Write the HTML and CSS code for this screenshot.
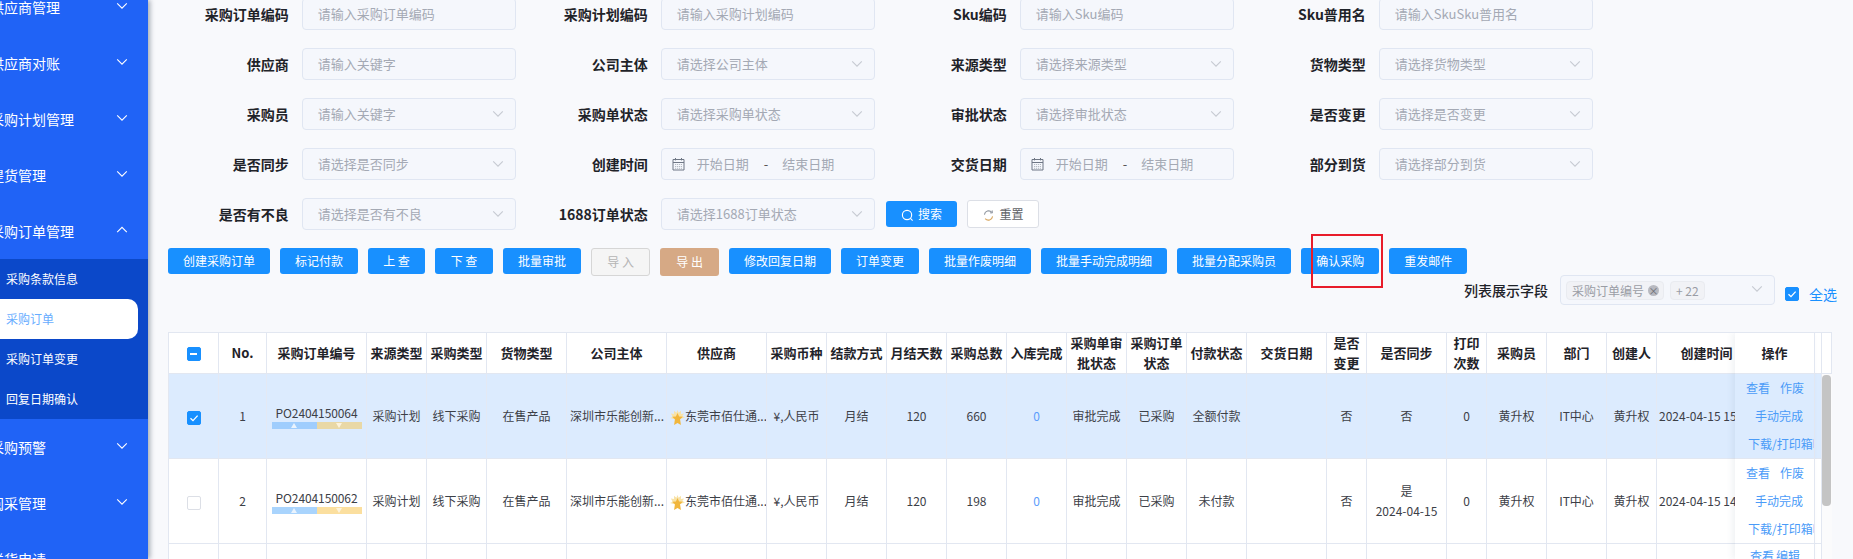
FILE: index.html
```html
<!DOCTYPE html>
<html lang="zh-CN">
<head>
<meta charset="utf-8">
<title>采购订单</title>
<link rel="stylesheet" href="styles.css">
</head>
<body>
<svg class="defs" width="0" height="0" aria-hidden="true">
  <symbol id="chev" viewBox="0 0 12 8"><path d="M1.2 1.4 6 6.2l4.8-4.8" fill="none" stroke="currentColor" stroke-width="1.1"/></symbol>
  <symbol id="chevup" viewBox="0 0 12 8"><path d="M1.2 6.2 6 1.4l4.8 4.8" fill="none" stroke="currentColor" stroke-width="1.1"/></symbol>
  <symbol id="cal" viewBox="0 0 13 14"><path d="M1 2.5h11v10.5H1zM1 5.5h11M3.5 1v2.4M9.500 1v2.400" fill="none" stroke="#6f7785" stroke-width="1"/><path d="M3 7.500h7M3 9.500h7M3 11.300h7" stroke="#a3a9b4" stroke-width=".8" stroke-dasharray="1.200 .8"/></symbol>
  <symbol id="star" viewBox="0 0 14 14"><path d="M7 0 8 2.600 10.300.8l-.1 2.900 3-.5-1.700 2.500 2.500 1.300-3.200.9L7 9 3.200 8.400 0 7.500l2.500-1.300L.8 3.200l3 .5L3.700.8 6 2.600z" fill="#f8e3a8"/><path d="M7 2.800 8.500 6l3.500.4-2.600 2.300.8 5.300L7 12.200 3.800 14l.8-5.300L2 6.400 5.500 6z" fill="#f1b63c"/></symbol>
  <symbol id="check" viewBox="0 0 14 14"><path d="M3.500 7.200 6 9.600l4.600-5" fill="none" stroke="#fff" stroke-width="1.300"/></symbol>
</svg>

<aside class="sidebar">
  <ul class="menu">
    <li class="menu-item"><span class="menu-text">供应商管理</span><svg class="menu-chev"><use href="#chev"/></svg></li>
    <li class="menu-item"><span class="menu-text">供应商对账</span><svg class="menu-chev"><use href="#chev"/></svg></li>
    <li class="menu-item"><span class="menu-text">采购计划管理</span><svg class="menu-chev"><use href="#chev"/></svg></li>
    <li class="menu-item"><span class="menu-text">提货管理</span><svg class="menu-chev"><use href="#chev"/></svg></li>
    <li class="menu-item"><span class="menu-text">采购订单管理</span><svg class="menu-chev"><use href="#chevup"/></svg></li>
    <li class="submenu">
      <div class="sub-item">采购条款信息</div>
      <div class="sub-item sub-active">采购订单</div>
      <div class="sub-item">采购订单变更</div>
      <div class="sub-item">回复日期确认</div>
    </li>
    <li class="menu-item"><span class="menu-text">采购预警</span><svg class="menu-chev"><use href="#chev"/></svg></li>
    <li class="menu-item"><span class="menu-text">阅采管理</span><svg class="menu-chev"><use href="#chev"/></svg></li>
    <li class="menu-item"><span class="menu-text">送货申请</span></li>
  </ul>
</aside>

<main class="main">
  <form class="filters">
    <div class="field"><label class="flabel">采购订单编码</label><div class="input"><span>请输入采购订单编码</span></div></div>
    <div class="field"><label class="flabel">采购计划编码</label><div class="input"><span>请输入采购计划编码</span></div></div>
    <div class="field"><label class="flabel">Sku编码</label><div class="input"><span>请输入Sku编码</span></div></div>
    <div class="field"><label class="flabel">Sku普用名</label><div class="input"><span>请输入SkuSku普用名</span></div></div>

    <div class="field"><label class="flabel">供应商</label><div class="input"><span>请输入关键字</span></div></div>
    <div class="field"><label class="flabel">公司主体</label><div class="input"><span>请选择公司主体</span><svg class="sel-chev"><use href="#chev"/></svg></div></div>
    <div class="field"><label class="flabel">来源类型</label><div class="input"><span>请选择来源类型</span><svg class="sel-chev"><use href="#chev"/></svg></div></div>
    <div class="field"><label class="flabel">货物类型</label><div class="input"><span>请选择货物类型</span><svg class="sel-chev"><use href="#chev"/></svg></div></div>

    <div class="field"><label class="flabel">采购员</label><div class="input"><span>请输入关键字</span><svg class="sel-chev"><use href="#chev"/></svg></div></div>
    <div class="field"><label class="flabel">采购单状态</label><div class="input"><span>请选择采购单状态</span><svg class="sel-chev"><use href="#chev"/></svg></div></div>
    <div class="field"><label class="flabel">审批状态</label><div class="input"><span>请选择审批状态</span><svg class="sel-chev"><use href="#chev"/></svg></div></div>
    <div class="field"><label class="flabel">是否变更</label><div class="input"><span>请选择是否变更</span><svg class="sel-chev"><use href="#chev"/></svg></div></div>

    <div class="field"><label class="flabel">是否同步</label><div class="input"><span>请选择是否同步</span><svg class="sel-chev"><use href="#chev"/></svg></div></div>
    <div class="field"><label class="flabel">创建时间</label><div class="input date"><svg class="cal"><use href="#cal"/></svg><span class="d1">开始日期</span><span class="dash">-</span><span class="d2">结束日期</span></div></div>
    <div class="field"><label class="flabel">交货日期</label><div class="input date"><svg class="cal"><use href="#cal"/></svg><span class="d1">开始日期</span><span class="dash">-</span><span class="d2">结束日期</span></div></div>
    <div class="field"><label class="flabel">部分到货</label><div class="input"><span>请选择部分到货</span><svg class="sel-chev"><use href="#chev"/></svg></div></div>

    <div class="field"><label class="flabel">是否有不良</label><div class="input"><span>请选择是否有不良</span><svg class="sel-chev"><use href="#chev"/></svg></div></div>
    <div class="field"><label class="flabel">1688订单状态</label><div class="input"><span>请选择1688订单状态</span><svg class="sel-chev"><use href="#chev"/></svg></div></div>
    <div class="search-actions">
      <button type="button" class="btn btn-search"><svg class="ic" viewBox="0 0 14 14"><circle cx="6.500" cy="6.500" r="5" fill="none" stroke="#fff" stroke-width="1.200"/><path d="m10.200 10.200 2.300 2.300" stroke="#fff" stroke-width="1.200"/></svg>搜索</button>
      <button type="button" class="btn btn-reset"><svg class="ic" viewBox="0 0 14 14"><path d="M2.600 6a4.600 4.600 0 0 1 8-2.400" fill="none" stroke="#8c939d" stroke-width="1.200"/><path d="M11.400 8a4.600 4.600 0 0 1-8 2.400" fill="none" stroke="#d8a65f" stroke-width="1.200"/><path d="m11 1.500.2 2.800-2.600-.2" fill="none" stroke="#8c939d"/></svg>重置</button>
    </div>
  </form>

  <div class="toolbar">
    <button type="button" class="btn">创建采购订单</button>
    <button type="button" class="btn">标记付款</button>
    <button type="button" class="btn btn-up">上 查</button>
    <button type="button" class="btn btn-down">下 查</button>
    <button type="button" class="btn">批量审批</button>
    <button type="button" class="btn btn-disabled">导 入</button>
    <button type="button" class="btn btn-export">导 出</button>
    <button type="button" class="btn">修改回复日期</button>
    <button type="button" class="btn">订单变更</button>
    <button type="button" class="btn">批量作废明细</button>
    <button type="button" class="btn">批量手动完成明细</button>
    <button type="button" class="btn">批量分配采购员</button>
    <button type="button" class="btn">确认采购</button>
    <button type="button" class="btn">重发邮件</button>
  </div>

  <div class="columns-row">
    <span class="columns-label">列表展示字段</span>
    <div class="multi">
      <span class="tag">采购订单编号<i class="tag-x">×</i></span>
      <span class="tag tag-n">+ 22</span>
      <svg class="multi-chev"><use href="#chev"/></svg>
    </div>
    <span class="cb cb-on cb-all"><svg><use href="#check"/></svg></span>
    <span class="all-text">全选</span>
  </div>

  <div class="table-wrap">
    <table class="grid">
      <colgroup>
        <col class="w50"><col class="w48"><col class="w100"><col class="w60"><col class="w60"><col class="w80"><col class="w100"><col class="w100">
        <col class="w60"><col class="w60"><col class="w60"><col class="w60"><col class="w60"><col class="w60"><col class="w60"><col class="w60">
        <col class="w80"><col class="w40"><col class="w80"><col class="w40"><col class="w60"><col class="w60"><col class="w50"><col class="w100"><col class="w57"><col class="w8">
      </colgroup>
      <thead>
        <tr>
          <th><span class="cb cb-on"><i class="dash-mark"></i></span></th>
          <th class="no">No.</th><th>采购订单编号</th><th>来源类型</th><th>采购类型</th><th>货物类型</th><th>公司主体</th><th>供应商</th>
          <th>采购币种</th><th>结款方式</th><th>月结天数</th><th>采购总数</th><th>入库完成</th><th>采购单审批状态</th><th>采购订单状态</th><th>付款状态</th>
          <th>交货日期</th><th>是否变更</th><th>是否同步</th><th>打印次数</th><th>采购员</th><th>部门</th><th>创建人</th><th class="nowrap">创建时间</th><th></th><th></th>
        </tr>
      </thead>
      <tbody>
        <tr class="selected">
          <td><span class="cb cb-on"><svg><use href="#check"/></svg></span></td>
          <td>1</td>
          <td><div class="po">PO2404150064</div><div class="bars bars-a"><span class="up"></span><span class="down"></span></div></td>
          <td>采购计划</td><td>线下采购</td><td>在售产品</td>
          <td class="clip">深圳市乐能创新...</td>
          <td class="clip sup"><svg class="star"><use href="#star"/></svg>东莞市佰仕通...</td>
          <td>¥,人民币</td><td>月结</td><td>120</td><td>660</td><td class="num-link">0</td><td>审批完成</td><td>已采购</td><td>全额付款</td>
          <td></td><td>否</td><td>否</td><td>0</td><td>黄升权</td><td>IT中心</td><td>黄升权</td><td class="time">2024-04-15 15:20:16</td><td></td><td></td>
        </tr>
        <tr>
          <td><span class="cb"></span></td>
          <td>2</td>
          <td><div class="po">PO2404150062</div><div class="bars"><span class="up"></span><span class="down"></span></div></td>
          <td>采购计划</td><td>线下采购</td><td>在售产品</td>
          <td class="clip">深圳市乐能创新...</td>
          <td class="clip sup"><svg class="star"><use href="#star"/></svg>东莞市佰仕通...</td>
          <td>¥,人民币</td><td>月结</td><td>120</td><td>198</td><td class="num-link">0</td><td>审批完成</td><td>已采购</td><td>未付款</td>
          <td></td><td>否</td><td>是<br>2024-04-15</td><td>0</td><td>黄升权</td><td>IT中心</td><td>黄升权</td><td class="time">2024-04-15 14:36:02</td><td></td><td></td>
        </tr>
        <tr>
          <td></td><td></td><td></td><td></td><td></td><td></td><td></td><td></td><td></td><td></td><td></td><td></td><td></td>
          <td></td><td></td><td></td><td></td><td></td><td></td><td></td><td></td><td></td><td></td><td></td><td></td><td></td>
        </tr>
      </tbody>
    </table>
    <div class="scroll-col">
      <div class="scroll-head"></div>
      <div class="scroll-track"><div class="scroll-thumb"></div></div>
    </div>
    <div class="op-col">
      <div class="op-head">操作</div>
      <div class="op-cell op-sel">
        <div class="op-line pad-a"><a>查看</a><a>作废</a></div>
        <div class="op-line pad-b"><a>手动完成</a></div>
        <div class="op-line pad-c"><a>下载/打印箱唛</a></div>
      </div>
      <div class="op-cell">
        <div class="op-line pad-a"><a>查看</a><a>作废</a></div>
        <div class="op-line pad-b"><a>手动完成</a></div>
        <div class="op-line pad-c"><a>下载/打印箱唛</a></div>
      </div>
      <div class="op-cell op-last">
        <div class="op-line pad-d"><a>查看</a><a>编辑</a></div>
      </div>
    </div>
  </div>

  <div class="redbox"></div>
</main>
</body>
</html>
```
FILE: styles.css
```css
* { box-sizing: border-box; }
html, body { margin: 0; padding: 0; }
body {
  width: 1853px;
  height: 559px;
  overflow: hidden;
  display: flex;
  font-family: "Noto Sans CJK SC", "Noto Sans", sans-serif;
  background: #f8f9fc;
  color: #303133;
}
.defs { position: absolute; }

/* sidebar */
.sidebar {
  width: 148px;
  height: 559px;
  flex: none;
  overflow: hidden;
  background: #2063f6;
  box-shadow: 2px 0 5px rgba(0, 21, 41, .35);
  position: relative;
  z-index: 2;
}
.menu { list-style: none; margin: -21px 0 0; padding: 0; }
.menu-item {
  height: 56px;
  display: flex;
  align-items: center;
  justify-content: space-between;
  padding-right: 20px;
  color: #fff;
  font-size: 14px;
}
.menu-text { margin: 0 0 1px -10px; white-space: nowrap; }
.menu-chev { width: 12px; height: 8px; color: #fff; margin-top: -2px; }
.submenu { background: #0b48c9; }
.sub-item {
  height: 40px;
  line-height: 40px;
  padding-left: 6px;
  font-size: 12px;
  color: #fff;
}
.sub-active {
  background: #fff;
  color: #68adff;
  width: 148px;
  margin-left: -10px;
  padding-left: 16px;
  border-radius: 10px;
}

/* main */
.main { flex: 1; min-width: 0; position: relative; }
.filters {
  display: grid;
  grid-template-columns: repeat(4, 359px);
  row-gap: 18px;
  margin-top: -2px;
  padding-left: 9px;
}
.field { display: flex; align-items: center; }
.flabel {
  width: 132px;
  margin-right: 13px;
  padding-bottom: 1px;
  text-align: right;
  font-size: 14px;
  font-weight: 700;
  color: #1f2329;
  white-space: nowrap;
}
.input {
  width: 214.500px;
  height: 32px;
  display: flex;
  align-items: center;
  justify-content: space-between;
  padding: 0 11px 1px 15px;
  background: #f5f7fc;
  border: 1px solid #e0e6f2;
  border-radius: 4px;
  font-size: 13px;
  color: #a4a9b4;
}
.sel-chev { width: 12px; height: 8px; color: #c6cad2; }
.date { justify-content: flex-start; padding-left: 10px; }
.cal { width: 13px; height: 14px; margin-right: 12px; }
.dash { color: #555; margin: 0 14px 0 15px; }
.search-actions { display: flex; align-items: center; gap: 10px; padding-left: 11px; }

/* buttons */
.btn {
  height: 26px;
  padding: 0 15px;
  border: 0;
  border-radius: 3px;
  background: #1890ff;
  color: #fff;
  font: inherit;
  font-size: 12px;
  line-height: 26px;
  white-space: nowrap;
}
.ic { width: 13px; height: 13px; margin-right: 4px; vertical-align: -2.500px; }
.btn-search { width: 71px; padding: 0; }
.btn-reset {
  width: 72px;
  height: 28px;
  padding: 0;
  background: #fff;
  border: 1px solid #dcdfe6;
  color: #606266;
}
.toolbar { display: flex; align-items: flex-start; gap: 10px; margin-top: 18px; padding-left: 20px; }
.btn-up { width: 57px; padding: 0; }
.btn-down { width: 58px; padding: 0; }
.btn-disabled {
  width: 59px;
  height: 28px;
  padding: 0;
  background: #f5f5f5;
  border: 1px solid #d6d6d6;
  color: #b4b4b4;
}
.btn-export { width: 59px; height: 28px; padding: 0; background: #d6a985; }

/* column picker */
.columns-row {
  display: flex;
  align-items: flex-start;
  justify-content: flex-end;
  margin-top: -1px;
  padding-right: 16px;
  height: 30px;
}
.columns-label { font-size: 14px; font-weight: 500; color: #1f2329; line-height: 30px; margin-right: 12px; }
.multi {
  width: 215px;
  height: 30px;
  display: flex;
  align-items: center;
  gap: 6px;
  padding-left: 5px;
  background: #f5f7fc;
  border: 1px solid #e0e6f2;
  border-radius: 4px;
  position: relative;
}
.tag {
  height: 19px;
  display: inline-flex;
  align-items: center;
  padding: 0 4px 0 5px;
  background: #f1f2f6;
  border: 1px solid #e9ebf0;
  border-radius: 4px;
  font-size: 12px;
  color: #9a9da5;
  white-space: nowrap;
}
.tag-n { padding: 0 5px; }
.tag-x {
  width: 11px;
  height: 11px;
  margin-left: 4px;
  border-radius: 50%;
  background: #b8b9c0;
  color: #6c6d74;
  font-style: normal;
  font-size: 10px;
  line-height: 11px;
  text-align: center;
}
.multi-chev { width: 12px; height: 8px; color: #c6cad2; position: absolute; right: 11px; top: 9px; }
.cb {
  display: inline-flex;
  align-items: center;
  justify-content: center;
  width: 14px;
  height: 14px;
  border: 1px solid #dcdfe6;
  border-radius: 2px;
  background: #fff;
  vertical-align: middle;
}
.cb svg { width: 14px; height: 14px; flex: none; }
.cb-on { background: #1890ff; border-color: #1890ff; }
.cb-all { margin: 12px 0 0 10px; }
.dash-mark { width: 7px; height: 2px; background: #fff; }
.all-text { font-size: 14px; color: #1890ff; margin: 9px 0 0 10px; line-height: 20px; }

/* table */
.table-wrap {
  position: relative;
  display: flex;
  width: 1664px;
  height: 227px;
  margin: 27px 0 0 20px;
  overflow: hidden;
  border-top: 1px solid #e2e7f1;
}
.grid {
  width: 1654px;
  flex: none;
  table-layout: fixed;
  border-collapse: separate;
  border-spacing: 0;
  background: #fff;
  border-left: 1px solid #e2e7f1;
  align-self: flex-start;
}
.w8 { width: 8px; } .w40 { width: 40px; } .w48 { width: 48px; } .w50 { width: 50px; }
.w57 { width: 57px; } .w60 { width: 60px; } .w80 { width: 80px; } .w100 { width: 100px; }
.grid th, .grid td {
  padding: 0 3px;
  border-right: 1px solid #e2e7f1;
  border-bottom: 1px solid #e2e7f1;
  text-align: center;
}
.grid th {
  height: 40px;
  font-size: 13px;
  font-weight: 700;
  line-height: 20px;
  color: #1f2329;
  box-sizing: content-box;
  padding-top: 0;
  padding-bottom: 0;
}
.grid td {
  height: 85px;
  font-size: 12px;
  line-height: 20px;
  color: #3c4047;
}
.selected td { background: #dcebfe; border-right-color: #e4e9f4; }
.nowrap { white-space: nowrap; }
.clip { white-space: nowrap; overflow: hidden; }
.grid .sup { padding: 0 0 0 3px; text-align: left; }
.star { width: 15px; height: 15px; vertical-align: -4px; }
.num-link { color: #5b9dfc !important; }
.time { white-space: nowrap; text-align: left !important; padding-left: 2px !important; }
.po { line-height: 16px; color: #3c4047; margin-top: 2px; letter-spacing: -.1px; }
.bars { display: flex; width: 90px; height: 7px; margin: 1px auto 0; background: #fbdf9f; }
.bars span { flex: 1; display: flex; align-items: center; justify-content: center; }
.bars .up { background: #a9d4fd; }
.bars .down { background: #fbdf9f; }
.bars-a .up { background: #9fcdfd; }
.bars-a .down { background: #e9d8a6; }
.bars .up::after, .bars .down::after {
  content: "";
  border-left: 3px solid transparent;
  border-right: 3px solid transparent;
}
.bars .up::after { border-bottom: 5px solid #eaf3fd; }
.bars .down::after { border-top: 5px solid #fdf3dc; }

.scroll-col { width: 10px; flex: none; display: flex; flex-direction: column; }
.scroll-head { height: 41px; background: #fff; border-right: 1px solid #e2e7f1; border-bottom: 1px solid #e2e7f1; }
.scroll-track { flex: 1; padding-top: 1px; background: #fbfbfc; }
.scroll-thumb { width: 9px; height: 131px; background: #c4c4c4; border-radius: 4px; }

/* fixed operation column */
.op-col {
  position: absolute;
  left: 1567px;
  top: 0;
  width: 80px;
  height: 226px;
  background: #fff;
  border-right: 1px solid #e2e7f1;
  box-shadow: -3px 0 6px rgba(60, 80, 120, .07);
}
.op-head {
  height: 41px;
  line-height: 40px;
  text-align: center;
  font-size: 13px;
  font-weight: 700;
  color: #1f2329;
  border-bottom: 1px solid #e2e7f1;
}
.op-cell { height: 85px; overflow: hidden; border-bottom: 1px solid #e2e7f1; }
.op-sel { background: #dcebfe; }
.op-last { border-bottom: 0; margin-top: -2px; }
.op-line { height: 28px; line-height: 28px; font-size: 12px; white-space: nowrap; overflow: hidden; display: flex; }
.op-line a { color: #4a9bf8; }
.pad-a { padding-left: 11px; gap: 10px; }
.pad-b { padding-left: 20px; }
.pad-c { padding-left: 13px; }
.pad-d { padding-left: 15px; gap: 2px; }

.redbox {
  position: absolute;
  left: 1163px;
  top: 234px;
  width: 72px;
  height: 54px;
  border: 2px solid #e81c2a;
  pointer-events: none;
}
```
